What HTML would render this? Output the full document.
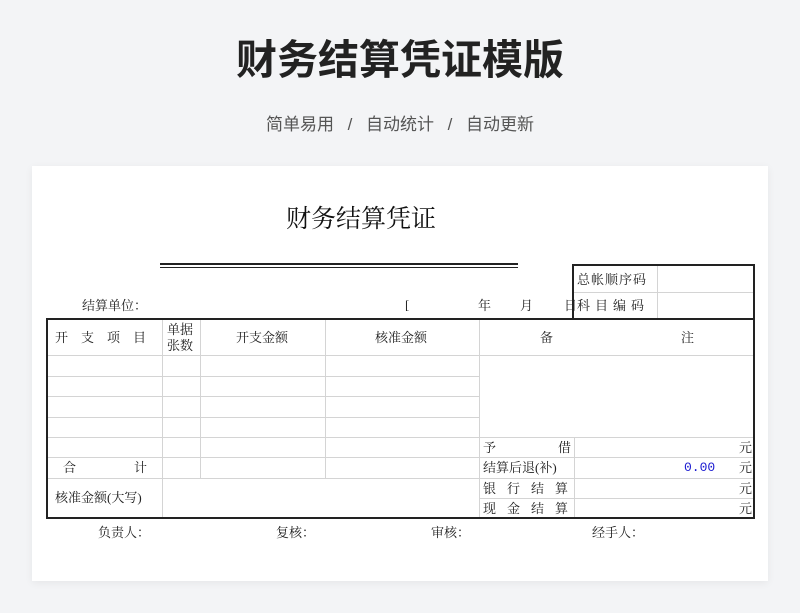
<!DOCTYPE html>
<html><head><meta charset="utf-8"><style>
*{margin:0;padding:0;box-sizing:border-box}
body{width:800px;height:613px;background:#f3f4f6;position:relative;overflow:hidden;font-family:"Liberation Serif","Noto Serif CJK SC",serif;color:#222}
.a{position:absolute;white-space:nowrap}
.h{position:absolute;height:1px;background:#d4d4d4}
.v{position:absolute;width:1px;background:#d4d4d4}
.H{position:absolute;height:2px;background:#222}
.V{position:absolute;width:2px;background:#222}
.t{position:absolute;font-size:13px;line-height:16px;white-space:nowrap}
.sans{font-family:"Liberation Sans","Noto Sans CJK SC",sans-serif}
</style></head><body>
<div class="a sans" style="left:0;width:800px;top:32px;text-align:center;font-size:41px;font-weight:bold;line-height:56px;color:#222">财务结算凭证模版</div>
<div class="a sans" style="left:0;width:800px;top:113px;text-align:center;font-size:17px;line-height:24px;color:#555;word-spacing:-2px">简单易用&nbsp;&nbsp;&nbsp;&nbsp;&nbsp;/&nbsp;&nbsp;&nbsp;&nbsp;&nbsp;自动统计&nbsp;&nbsp;&nbsp;&nbsp;&nbsp;/&nbsp;&nbsp;&nbsp;&nbsp;&nbsp;自动更新</div>
<div class="a" style="left:32px;top:166px;width:736px;height:415px;background:#fff;box-shadow:0 2px 8px rgba(0,0,0,.06)"></div>
<div class="a" style="left:286px;top:203px;font-size:25px;line-height:34px;color:#111">财务结算凭证</div>
<div class="H" style="left:160px;top:263px;width:358px"></div>
<div class="H" style="left:160px;top:267px;width:358px;height:1px"></div>
<div class="h" style="left:572px;top:292px;width:181px"></div>
<div class="v" style="left:657px;top:265px;height:54px"></div>
<div class="H" style="left:572px;top:264px;width:183px"></div>
<div class="V" style="left:572px;top:264px;height:56px"></div>
<div class="V" style="left:753px;top:264px;height:56px"></div>
<div class="t" style="left:577px;top:272px;letter-spacing:1px">总帐顺序码</div>
<div class="t" style="left:577px;top:298px;letter-spacing:5px">科目编码</div>
<div class="t" style="left:82px;top:298px">结算单位：</div>
<div class="t" style="left:405px;top:297px">[</div>
<div class="t" style="left:478px;top:298px">年</div>
<div class="t" style="left:520px;top:298px">月</div>
<div class="t" style="left:564px;top:298px">日</div>
<div class="h" style="left:47px;top:355px;width:706px"></div>
<div class="h" style="left:47px;top:376px;width:432px"></div>
<div class="h" style="left:47px;top:396px;width:432px"></div>
<div class="h" style="left:47px;top:417px;width:432px"></div>
<div class="h" style="left:47px;top:437px;width:706px"></div>
<div class="h" style="left:47px;top:457px;width:706px"></div>
<div class="h" style="left:47px;top:478px;width:706px"></div>
<div class="h" style="left:479px;top:498px;width:274px"></div>
<div class="v" style="left:162px;top:320px;height:198px"></div>
<div class="v" style="left:200px;top:320px;height:158px"></div>
<div class="v" style="left:325px;top:320px;height:158px"></div>
<div class="v" style="left:479px;top:320px;height:198px"></div>
<div class="v" style="left:574px;top:437px;height:81px"></div>
<div class="H" style="left:46px;top:318px;width:709px"></div>
<div class="H" style="left:46px;top:517px;width:709px"></div>
<div class="V" style="left:46px;top:318px;height:201px"></div>
<div class="V" style="left:753px;top:318px;height:201px"></div>
<div class="t" style="left:55px;top:330px;letter-spacing:13px">开支项目</div>
<div class="t" style="left:167px;top:322px">单据<br>张数</div>
<div class="t" style="left:236px;top:330px">开支金额</div>
<div class="t" style="left:375px;top:330px">核准金额</div>
<div class="t" style="left:540px;top:330px">备</div>
<div class="t" style="left:681px;top:330px">注</div>
<div class="t" style="left:63px;top:460px">合</div>
<div class="t" style="left:134px;top:460px">计</div>
<div class="t" style="left:55px;top:490px">核准金额(大写)</div>
<div class="t" style="left:483px;top:440px">予</div>
<div class="t" style="left:558px;top:440px">借</div>
<div class="t" style="left:483px;top:460px">结算后退(补)</div>
<div class="t" style="left:483px;top:481px;letter-spacing:11px">银行结算</div>
<div class="t" style="left:483px;top:501px;letter-spacing:11px">现金结算</div>
<div class="t" style="left:739px;top:440px">元</div>
<div class="t" style="left:739px;top:460px">元</div>
<div class="t" style="left:739px;top:481px">元</div>
<div class="t" style="left:739px;top:501px">元</div>
<div class="t" style="left:684px;top:460px;color:#1a1ad0;font-family:'Liberation Mono',monospace">0.00</div>
<div class="t" style="left:98px;top:525px">负责人：</div>
<div class="t" style="left:276px;top:525px">复核：</div>
<div class="t" style="left:431px;top:525px">审核：</div>
<div class="t" style="left:592px;top:525px">经手人：</div>
</body></html>
